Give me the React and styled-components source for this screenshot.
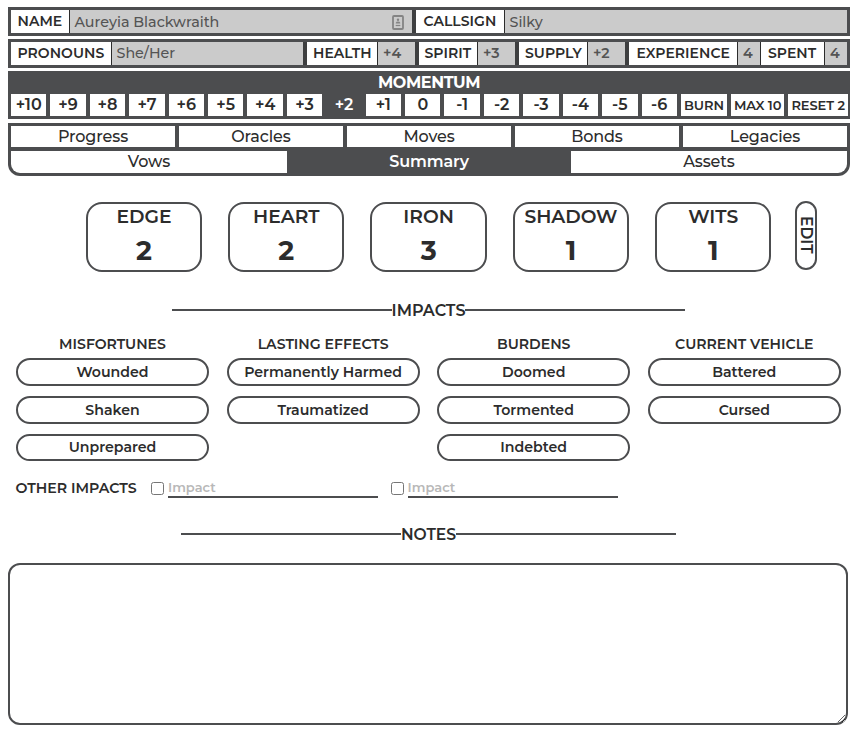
import React from "react";
import styled, { createGlobalStyle } from "styled-components";

const INK = "#2c2c2c";
const LINE = "#4c4d4f";
const FONT = '"Montserrat", "Inter", sans-serif';

const GlobalStyle = createGlobalStyle`
  *, *::before, *::after { box-sizing: border-box; }
  body { margin: 0; background: #fff; color: ${INK}; font-family: ${FONT}; }
  button, input, textarea { font-family: inherit; color: inherit; }
`;

const Sheet = styled.main`
  width: 861px;
  padding: 7px 13px 0 8px;
  display: flex;
  flex-direction: column;
`;

const FieldBar = styled.div`
  display: flex;
  width: 842px;
  height: 29px;
  padding: 3px;
  margin-bottom: 3px;
  background: ${LINE};
`;

const FieldGroup = styled.label`
  display: flex;
  width: ${(p) => p.$width}px;
  flex: none;
  &:not(:first-child) {
    border-left: ${(p) => (p.$joined ? 1 : 4)}px solid ${(p) => (p.$joined ? INK : "#3e3f40")};
  }
`;

const FieldLabel = styled.span`
  width: ${(p) => p.$width}px;
  flex: none;
  background: #fff;
  border-right: 1px solid ${INK};
  padding-left: ${(p) => p.$pad ?? 6.5}px;
  font-size: 14px;
  font-weight: 600;
  line-height: 22px;
  letter-spacing: 0.05px;
  white-space: nowrap;
`;

const FieldValue = styled.span`
  flex: 1;
  display: flex;
  align-items: center;
  justify-content: space-between;
  min-width: 0;
  padding: ${(p) => (p.$low ? "1px" : 0)} 8px ${(p) => (p.$low ? 0 : "1px")} ${(p) => (p.$strong ? 5 : 4.5)}px;
  background: #cbcbcb;
  color: #545454;
  font-size: 14.3px;
  font-weight: ${(p) => (p.$strong ? 600 : 500)};
  line-height: 22px;
  white-space: nowrap;
`;

const Momentum = styled.section`
  width: 842px;
  height: 48px;
  padding: 0 3px 3px;
  background: ${LINE};
`;

const MomentumTitle = styled.h2`
  margin: 0;
  height: 23px;
  color: #fff;
  font-size: 16px;
  font-weight: 700;
  line-height: 23px;
  letter-spacing: -0.4px;
  text-align: center;
`;

const MomentumTrack = styled.div`
  display: grid;
  grid-template-columns: repeat(17, 35.41px) 46px 53.5px 59.5px;
  column-gap: 4px;
  height: 22px;
`;

const TrackCell = styled.button`
  border: 0;
  padding: 0 0 ${(p) => (p.$small ? 0 : 2)}px;
  background: ${(p) => (p.$active ? LINE : "#fff")};
  color: ${(p) => (p.$active ? "#fff" : INK)};
  font-size: ${(p) => (p.$small ? 13 : 16)}px;
  font-weight: 600;
  letter-spacing: ${(p) => (p.$small ? "-0.08px" : "normal")};
  text-align: center;
  white-space: nowrap;
`;

const Tabs = styled.nav`
  display: flex;
  flex-direction: column;
  gap: 4px;
  width: 842px;
  height: 53px;
  margin-top: 4px;
  padding: 3px;
  background: ${LINE};
  border-radius: 0 0 12px 12px;
`;

const TabRow = styled.div`
  display: grid;
  grid-template-columns: repeat(${(p) => p.$count}, 1fr);
  column-gap: 4px;
  height: ${(p) => p.$height}px;
`;

const Tab = styled.button`
  border: 0;
  padding: 0;
  background: ${(p) => (p.$active ? LINE : "#fff")};
  color: ${(p) => (p.$active ? "#fff" : INK)};
  font-size: 16px;
  font-weight: ${(p) => (p.$active ? 600 : 500)};
  letter-spacing: -0.1px;
  ${TabRow}:last-child & { padding-bottom: 2px; }
  ${TabRow}:last-child &:first-child { border-bottom-left-radius: 9px; }
  ${TabRow}:last-child &:last-child { border-bottom-right-radius: 9px; }
`;

const Stats = styled.section`
  display: flex;
  align-items: flex-start;
  gap: 26px;
  margin: 26px 0 0 77.9px;
`;

const StatBox = styled.div`
  width: 116.3px;
  height: 70px;
  border: 2px solid ${LINE};
  border-radius: 16px;
  text-align: center;
`;

const StatName = styled.h3`
  margin: 0;
  padding-top: 1px;
  font-size: 18.72px;
  font-weight: 600;
  line-height: 23px;
`;

const StatValue = styled.div`
  margin-top: 6px;
  font-size: 27px;
  font-weight: 700;
  line-height: 34px;
`;

const EditButton = styled.button`
  width: 22px;
  height: 69px;
  margin: -1px 0 0 -2px;
  padding: 0 0 2px;
  display: flex;
  align-items: center;
  justify-content: center;
  background: #fff;
  border: 2px solid ${LINE};
  border-radius: 11px;
  font-size: 15.5px;
  font-weight: 600;
  line-height: 18px;
  writing-mode: vertical-rl;
`;

const Heading = styled.h2`
  display: flex;
  align-items: center;
  justify-content: center;
  width: 841px;
  height: 20px;
  margin: ${(p) => p.$top}px 0 0;
  font-size: ${(p) => p.$size ?? 16}px;
  font-weight: 600;
  line-height: 20px;
  &::before, &::after {
    content: "";
    width: 220px;
    height: 2px;
    background: ${LINE};
  }
`;

const HeadingText = styled.span`
  padding-top: 2px;
`;

const ImpactColumns = styled.section`
  display: grid;
  grid-template-columns: repeat(4, 193px);
  column-gap: 17.6px;
  margin: 15.3px 0 0 8px;
`;

const ImpactColumn = styled.div`
  display: flex;
  flex-direction: column;
  gap: 10.1px;
`;

const ImpactTitle = styled.h3`
  margin: 0 0 -5.1px;
  height: 18px;
  font-size: 14.1px;
  font-weight: 600;
  line-height: 18px;
  text-align: center;
`;

const ImpactPill = styled.button`
  height: 27.6px;
  padding: 0;
  background: #fff;
  border: 2px solid ${LINE};
  border-radius: 14px;
  font-size: 14.15px;
  font-weight: 600;
`;

const OtherImpacts = styled.section`
  display: flex;
  align-items: flex-start;
  height: 20px;
  margin: 16.7px 0 0 7.4px;
`;

const OtherLabel = styled.span`
  width: 135.6px;
  font-size: 14.2px;
  font-weight: 600;
  line-height: 20px;
`;

const Check = styled.input`
  width: 13px;
  height: 13px;
  margin: 4px 4px 0 0;
`;

const ImpactInput = styled.input`
  width: 210px;
  height: 20px;
  margin-right: 12.6px;
  padding: 1px 0 0;
  border: 0;
  border-bottom: 2px solid ${LINE};
  border-radius: 0;
  background: transparent;
  font-size: 13px;
  font-weight: 600;
  &::placeholder { color: #b8b8b8; opacity: 1; }
`;

const Notes = styled.textarea`
  display: block;
  width: 840px;
  height: 162px;
  margin: 19px 0 0;
  border: 2px solid ${LINE};
  border-radius: 12px;
  background: #fff;
  resize: both;
`;

const ContactIcon = () => (
  <svg width="12" height="15" viewBox="0 0 12 15" fill="none">
    <rect x="1" y="1" width="10" height="13" rx="1" stroke="#848484" strokeWidth="1.8" />
    <circle cx="6" cy="4.8" r="1.2" fill="#848484" />
    <path d="M3.8 8.6V7.8Q4 6.4 6 6.4Q8 6.4 8.2 7.8V8.6Z" fill="#848484" />
    <path d="M3.7 10.5H8.3" stroke="#848484" strokeWidth="1.2" />
  </svg>
);

const conditions = [
  { title: "MISFORTUNES", items: ["Wounded", "Shaken", "Unprepared"] },
  { title: "LASTING EFFECTS", items: ["Permanently Harmed", "Traumatized"] },
  { title: "BURDENS", items: ["Doomed", "Tormented", "Indebted"] },
  { title: "CURRENT VEHICLE", items: ["Battered", "Cursed"] },
];

const stats = [["EDGE", 2], ["HEART", 2], ["IRON", 3], ["SHADOW", 1], ["WITS", 1]];
const momentum = Array.from({ length: 17 }, (_, i) => 10 - i);
const signed = (n) => (n > 0 ? `+${n}` : `${n}`);

const details = [
  { label: "PRONOUNS", value: "She/Her", width: 292, labelWidth: 101 },
  { label: "HEALTH", value: "+4", width: 112, labelWidth: 71, pad: 6, strong: true },
  { label: "SPIRIT", value: "+3", width: 100, labelWidth: 59, pad: 5.5, strong: true },
  { label: "SUPPLY", value: "+2", width: 110, labelWidth: 69, pad: 6, strong: true },
  { label: "EXPERIENCE", value: "4", width: 135, labelWidth: 109, pad: 7.5, strong: true },
  { label: "SPENT", value: "4", width: 87, labelWidth: 64, pad: 7, strong: true, joined: true },
];

export default function App() {
  return (
    <Sheet>
      <GlobalStyle />
      <FieldBar>
        <FieldGroup $width={401}>
          <FieldLabel $width={59}>NAME</FieldLabel>
          <FieldValue $low>Aureyia Blackwraith<ContactIcon /></FieldValue>
        </FieldGroup>
        <FieldGroup $width={435}>
          <FieldLabel $width={89} $pad={7.5}>CALLSIGN</FieldLabel>
          <FieldValue $low>Silky</FieldValue>
        </FieldGroup>
      </FieldBar>
      <FieldBar>
        {details.map((d) => (
          <FieldGroup key={d.label} $width={d.width} $joined={d.joined}>
            <FieldLabel $width={d.labelWidth} $pad={d.pad}>{d.label}</FieldLabel>
            <FieldValue $strong={d.strong}>{d.value}</FieldValue>
          </FieldGroup>
        ))}
      </FieldBar>
      <Momentum>
        <MomentumTitle>MOMENTUM</MomentumTitle>
        <MomentumTrack>
          {momentum.map((n) => (
            <TrackCell key={n} $active={n === 2}>{signed(n)}</TrackCell>
          ))}
          <TrackCell $small>BURN</TrackCell>
          <TrackCell $small>MAX 10</TrackCell>
          <TrackCell $small>RESET 2</TrackCell>
        </MomentumTrack>
      </Momentum>
      <Tabs>
        <TabRow $count={5} $height={21}>
          {["Progress", "Oracles", "Moves", "Bonds", "Legacies"].map((t) => (
            <Tab key={t}>{t}</Tab>
          ))}
        </TabRow>
        <TabRow $count={3} $height={22}>
          {["Vows", "Summary", "Assets"].map((t) => (
            <Tab key={t} $active={t === "Summary"}>{t}</Tab>
          ))}
        </TabRow>
      </Tabs>
      <Stats>
        {stats.map(([name, value]) => (
          <StatBox key={name}>
            <StatName>{name}</StatName>
            <StatValue>{value}</StatValue>
          </StatBox>
        ))}
        <EditButton>EDIT</EditButton>
      </Stats>
      <Heading $top={28}><HeadingText>IMPACTS</HeadingText></Heading>
      <ImpactColumns>
        {conditions.map((c) => (
          <ImpactColumn key={c.title}>
            <ImpactTitle>{c.title}</ImpactTitle>
            {c.items.map((item) => (
              <ImpactPill key={item}>{item}</ImpactPill>
            ))}
          </ImpactColumn>
        ))}
      </ImpactColumns>
      <OtherImpacts>
        <OtherLabel>OTHER IMPACTS</OtherLabel>
        <Check type="checkbox" />
        <ImpactInput placeholder="Impact" />
        <Check type="checkbox" />
        <ImpactInput placeholder="Impact" />
      </OtherImpacts>
      <Heading $top={26} $size={15.6}><HeadingText>NOTES</HeadingText></Heading>
      <Notes />
    </Sheet>
  );
}
